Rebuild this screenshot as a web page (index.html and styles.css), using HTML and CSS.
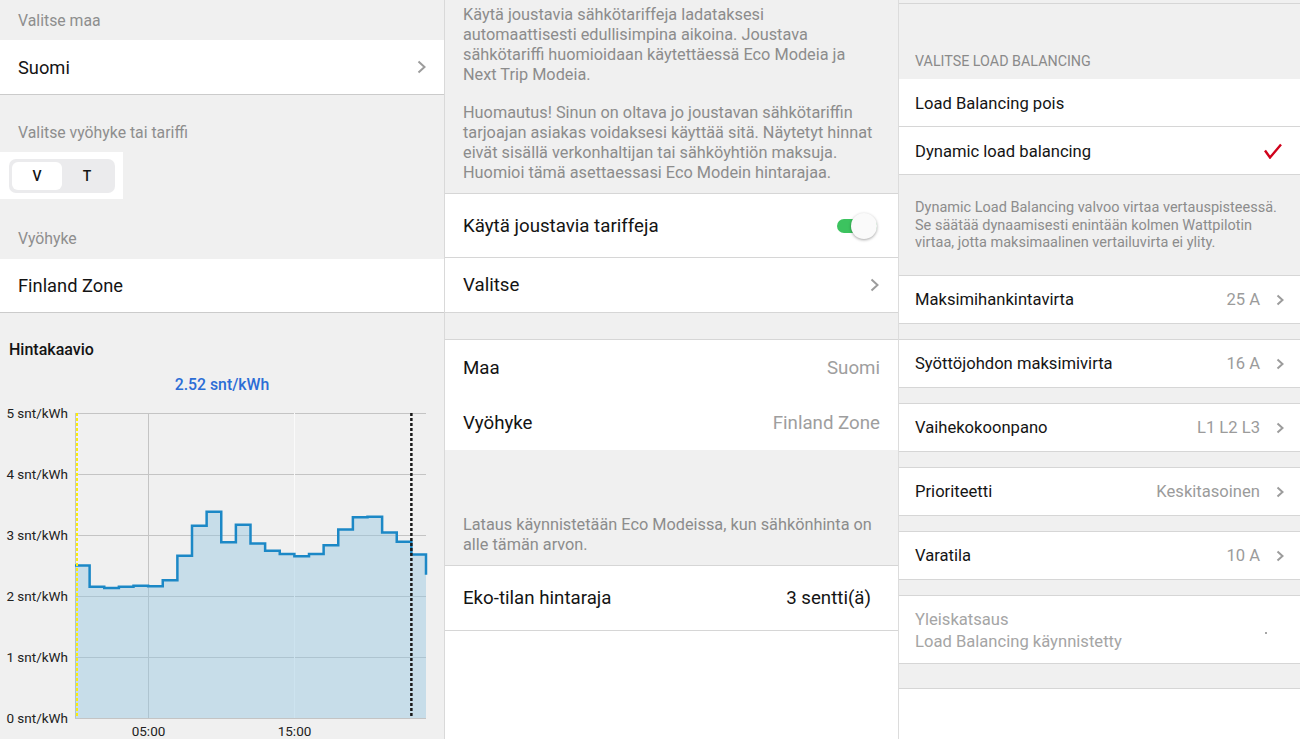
FILE: index.html
```html
<!DOCTYPE html>
<html lang="fi">
<head>
  <meta charset="UTF-8">
  <meta name="viewport" content="width=device-width, initial-scale=1">
  <title>Latausasetukset</title>
  <link rel="stylesheet" href="styles.css">
</head>
<body>
  <div class="screens">

    <!-- Tariff / price chart -->
    <section class="screen screen-tariff">
      <div class="caption caption-first">Valitse maa</div>
      <div class="row">
        <span>Suomi</span>
        <svg class="chevron" viewBox="0 0 9 14"><polyline points="1.5,1.5 7.5,7 1.5,12.5"/></svg>
      </div>
      <div class="caption caption-gap">Valitse vyöhyke tai tariffi</div>
      <div class="segment-wrap">
        <div class="segment">
          <span class="seg active">V</span>
          <span class="seg">T</span>
        </div>
      </div>
      <div class="caption caption-zone">Vyöhyke</div>
      <div class="row row-zone"><span>Finland Zone</span></div>
      <div class="chart-title">Hintakaavio</div>
      <div class="chart-value">2.52 snt/kWh</div>
      <svg id="priceChart" class="chart" width="444" height="339" viewBox="0 0 444 339"></svg>
    </section>

    <!-- Eco mode settings -->
    <section class="screen screen-eco">
      <div class="note note-top">
        <p>Käytä joustavia sähkötariffeja ladataksesi<br>automaattisesti edullisimpina aikoina. Joustava<br>sähkötariffi huomioidaan käytettäessä Eco Modeia ja<br>Next Trip Modeia.</p>
        <p>Huomautus! Sinun on oltava jo joustavan sähkötariffin<br>tarjoajan asiakas voidaksesi käyttää sitä. Näytetyt hinnat<br>eivät sisällä verkonhaltijan tai sähköyhtiön maksuja.<br>Huomioi tämä asettaessasi Eco Modein hintarajaa.</p>
      </div>
      <div class="eco-row eco-toggle">
        <span>Käytä joustavia tariffeja</span>
        <span class="switch on"></span>
      </div>
      <div class="eco-row eco-select">
        <span>Valitse</span>
        <svg class="chevron" viewBox="0 0 9 14"><polyline points="1.5,1.5 7.5,7 1.5,12.5"/></svg>
      </div>
      <div class="eco-info">
        <div class="info-row"><span>Maa</span><span class="muted">Suomi</span></div>
        <div class="info-row"><span>Vyöhyke</span><span class="muted">Finland Zone</span></div>
      </div>
      <div class="note note-limit">
        <p>Lataus käynnistetään Eco Modeissa, kun sähkönhinta on<br>alle tämän arvon.</p>
      </div>
      <div class="eco-row eco-limit">
        <span>Eko-tilan hintaraja</span>
        <span>3 sentti(ä)</span>
      </div>
      <div class="fill-white"></div>
    </section>

    <!-- Load balancing -->
    <section class="screen screen-balance">
      <div class="caption-upper">VALITSE LOAD BALANCING</div>
      <div class="option">Load Balancing pois</div>
      <div class="option">
        <span>Dynamic load balancing</span>
        <svg class="check" viewBox="0 0 18 16"><polyline points="1,7.5 6,14.5 17,1.5"/></svg>
      </div>
      <div class="note note-small">
        <p>Dynamic Load Balancing valvoo virtaa vertauspisteessä.<br>Se säätää dynaamisesti enintään kolmen Wattpilotin<br>virtaa, jotta maksimaalinen vertailuvirta ei ylity.</p>
      </div>

      <div class="card">
        <span class="card-label">Maksimihankintavirta</span>
        <span class="card-value">25 A</span>
        <svg class="chevron chevron-sm" viewBox="0 0 8 12"><polyline points="1.5,1.5 6.5,6 1.5,10.5"/></svg>
      </div>
      <div class="card">
        <span class="card-label">Syöttöjohdon maksimivirta</span>
        <span class="card-value">16 A</span>
        <svg class="chevron chevron-sm" viewBox="0 0 8 12"><polyline points="1.5,1.5 6.5,6 1.5,10.5"/></svg>
      </div>
      <div class="card">
        <span class="card-label">Vaihekokoonpano</span>
        <span class="card-value">L1 L2 L3</span>
        <svg class="chevron chevron-sm" viewBox="0 0 8 12"><polyline points="1.5,1.5 6.5,6 1.5,10.5"/></svg>
      </div>
      <div class="card">
        <span class="card-label">Prioriteetti</span>
        <span class="card-value">Keskitasoinen</span>
        <svg class="chevron chevron-sm" viewBox="0 0 8 12"><polyline points="1.5,1.5 6.5,6 1.5,10.5"/></svg>
      </div>
      <div class="card">
        <span class="card-label">Varatila</span>
        <span class="card-value">10 A</span>
        <svg class="chevron chevron-sm" viewBox="0 0 8 12"><polyline points="1.5,1.5 6.5,6 1.5,10.5"/></svg>
      </div>
      <div class="card card-overview">
        <div class="overview-text">
          <div>Yleiskatsaus</div>
          <div>Load Balancing käynnistetty</div>
        </div>
        <span class="busy-dot"></span>
      </div>
      <div class="fill-white fill-balance"></div>
    </section>
  </div>

  <script>
    // Hourly spot prices (snt/kWh) for the day
    const prices = [2.50, 2.15, 2.13, 2.15, 2.17, 2.16, 2.26, 2.66, 3.15, 3.38, 2.88, 3.17,
                    2.86, 2.74, 2.69, 2.65, 2.69, 2.83, 3.09, 3.29, 3.30, 3.04, 2.89, 2.68];
    const nextPrice = 2.35;

    function drawChart(svgEl) {
      const plot = { left: 75, right: 426, top: 13, bottom: 318 };
      const unit = (plot.bottom - plot.top) / 5;
      const hourW = (plot.right - plot.left) / 24;
      const px = h => plot.left + h * hourW;
      const py = v => plot.bottom - v * unit;

      let grid = '';
      for (let v = 0; v <= 5; v++) {
        const y = Math.round(py(v)) + 0.5;
        grid += `<line class="grid" x1="${plot.left}" x2="${plot.right}" y1="${y}" y2="${y}"/>`;
        grid += `<text class="axis" x="68" y="${y + 4.5}" text-anchor="end">${v} snt/kWh</text>`;
      }
      [5, 15].forEach(h => {
        const x = Math.round(px(h)) + 0.5;
        const cls = h === 15 ? 'grid grid-light' : 'grid';
        grid += `<line class="${cls}" x1="${x}" x2="${x}" y1="${plot.top}" y2="${plot.bottom}"/>`;
        grid += `<text class="axis" x="${x}" y="${plot.bottom + 17.5}" text-anchor="middle">${String(h).padStart(2, '0')}:00</text>`;
      });
      grid += `<line class="grid" x1="${plot.left + 0.5}" x2="${plot.left + 0.5}" y1="${plot.top}" y2="${plot.bottom}"/>`;

      // step line, one segment per hour
      let line = `M${plot.left} ${py(prices[0])}`;
      prices.forEach((p, i) => {
        if (i > 0) line += ` V${py(p)}`;
        line += ` H${px(i + 1)}`;
      });
      line += ` V${py(nextPrice)}`;

      const area = `<path class="area" d="${line} V${plot.bottom} H${plot.left} Z"/>`;
      const stroke = `<path class="price" d="${line}"/>`;
      const marks =
        `<line class="mark-start" x1="77" x2="77" y1="${plot.top}" y2="${plot.bottom}"/>` +
        `<line class="mark-now" x1="${px(23)}" x2="${px(23)}" y1="${plot.top}" y2="${plot.bottom}"/>`;

      svgEl.innerHTML = grid + area + stroke + marks;
    }

    drawChart(document.getElementById('priceChart'));
  </script>
</body>
</html>
```

FILE: styles.css
```css
* {
  box-sizing: border-box;
}
html, body {
  margin: 0;
}
body {
  font-family: Roboto, "Noto Sans", sans-serif;
  background: #f0f0f0;
  color: #141414;
}
p {
  margin: 0;
}
.screens {
  display: grid;
  grid-template-columns: 444px 454px 402px;
  height: 739px;
  overflow: hidden;
}
.screen {
  display: flex;
  flex-direction: column;
  background: #f0f0f0;
  overflow: hidden;
}
.chevron {
  width: 9px;
  height: 14px;
  fill: none;
  stroke: #9c9c9c;
  stroke-width: 2;
  flex: none;
}
.chevron-sm {
  width: 8px;
  height: 12px;
}
.muted {
  color: #9e9e9e;
}
.fill-white {
  flex: 1;
  background: #fff;
}

/* left screen */
.caption {
  color: #8e8e8e;
  font-size: 15.8px;
  line-height: 20px;
  padding: 0 18px;
}
.caption-first {
  padding-top: 11px;
  padding-bottom: 9px;
}
.caption-gap {
  padding-top: 28px;
  padding-bottom: 9px;
}
.caption-zone {
  padding-top: 30px;
  padding-bottom: 10px;
}
.row {
  display: flex;
  align-items: center;
  justify-content: space-between;
  height: 55px;
  padding: 0 18px;
  background: #fff;
  font-size: 18.3px;
  border-bottom: 1px solid #cbcbcb;
}
.row-zone {
  height: 54px;
}
.segment-wrap {
  width: 123px;
  height: 47px;
  padding: 7px 0 0 9px;
  background: #fff;
}
.segment {
  display: flex;
  width: 106px;
  height: 34px;
  padding: 3px;
  background: #ebebed;
  border-radius: 7px;
}
.seg {
  flex: 1;
  display: flex;
  align-items: center;
  justify-content: center;
  font-size: 14px;
  font-weight: 500;
  border-radius: 6px;
}
.seg.active {
  background: #fff;
}
.chart-title {
  padding: 27px 9px 0;
  font-size: 16px;
  font-weight: 500;
  line-height: 20px;
}
.chart-value {
  margin-top: 15px;
  text-align: center;
  color: #2b6dd6;
  font-size: 15.8px;
  font-weight: 500;
  line-height: 20px;
}
.chart {
  display: block;
  margin-top: 5px;
  flex: none;
}
.chart .grid {
  stroke: #c4c4c4;
  stroke-width: 1;
}
.chart .grid-light {
  stroke: #fafafa;
}
.chart .axis {
  font-family: Roboto, sans-serif;
  font-size: 13.5px;
  fill: #222;
}
.chart .area {
  fill: #8ec3df;
  fill-opacity: 0.42;
}
.chart .price {
  fill: none;
  stroke: #1c88c6;
  stroke-width: 2.5;
}
.chart .mark-start {
  stroke: #fbee0a;
  stroke-width: 2;
  stroke-dasharray: 3 2;
}
.chart .mark-now {
  stroke: #1a1a1a;
  stroke-width: 2.5;
  stroke-dasharray: 3 2;
}

/* middle screen */
.screen-eco {
  border-left: 1px solid #d9d9d9;
}
.note {
  color: #8c8c8c;
  font-size: 16.3px;
  line-height: 20px;
  white-space: nowrap;
}
.note-top {
  padding: 5px 18px 10px;
}
.note-top p + p {
  margin-top: 18px;
}
.eco-row {
  display: flex;
  align-items: center;
  justify-content: space-between;
  padding: 0 19px 0 18px;
  background: #fff;
  font-size: 18.7px;
  border-bottom: 1px solid #d6d6d6;
}
.eco-toggle {
  height: 65px;
  border-top: 1px solid #d6d6d6;
  padding-right: 21px;
}
.eco-select {
  height: 55px;
}
.eco-info {
  margin-top: 26px;
  border-top: 1px solid #d6d6d6;
  background: #fff;
}
.info-row {
  display: flex;
  align-items: center;
  justify-content: space-between;
  height: 55px;
  padding: 0 18px;
  font-size: 18.7px;
}
.info-row:first-child {
  height: 55px;
}
.note-limit {
  padding: 65px 18px 10px;
}
.eco-limit {
  height: 66px;
  border-top: 1px solid #d6d6d6;
  padding-right: 27px;
}
.switch {
  position: relative;
  width: 40px;
  height: 14px;
  border-radius: 7px;
  background: #3cc35f;
}
.switch::after {
  content: "";
  position: absolute;
  right: 0;
  top: -6px;
  width: 26px;
  height: 26px;
  border-radius: 50%;
  background: #fafafa;
  box-shadow: 0 1px 3px rgba(0, 0, 0, 0.35);
}

/* right screen */
.screen-balance {
  border-left: 1px solid #dcdcdc;
  padding-top: 3px;
}
.caption-upper {
  border-top: 1px solid #d6d6d6;
  padding: 49px 16px 10px;
  color: #8a8a8a;
  font-size: 14.3px;
  line-height: 16px;
}
.option {
  display: flex;
  align-items: center;
  justify-content: space-between;
  height: 48px;
  padding: 1px 18px 0 16px;
  background: #fff;
  font-size: 16.6px;
  border-bottom: 1px solid #d6d6d6;
}
.check {
  width: 18px;
  height: 16px;
  fill: none;
  stroke: #d0021b;
  stroke-width: 2.4;
}
.note-small {
  padding: 24px 16px 23px;
  font-size: 14.5px;
  line-height: 17.5px;
}
.card {
  display: flex;
  align-items: center;
  height: 49px;
  margin-bottom: 15px;
  padding: 1px 16px 0;
  background: #fff;
  font-size: 16.6px;
  border-top: 1px solid #d6d6d6;
  border-bottom: 1px solid #d6d6d6;
}
.card-label {
  flex: 1;
}
.card-value {
  color: #9b9b9b;
  margin-right: 16px;
}
.card-overview {
  height: 69px;
  margin-bottom: 24px;
  padding-top: 3px;
  color: #a5a5a5;
  line-height: 22px;
}
.overview-text {
  flex: 1;
}
.busy-dot {
  width: 2px;
  height: 2px;
  margin-right: 17px;
  margin-top: 4px;
  background: #888;
  border-radius: 50%;
}
.fill-balance {
  border-top: 1px solid #d6d6d6;
}
```
